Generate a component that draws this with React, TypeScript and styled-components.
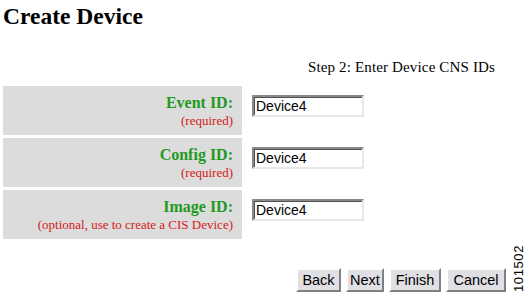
import React from "react";
import styled, { createGlobalStyle } from "styled-components";

const Global = createGlobalStyle`
  html, body { margin: 0; padding: 0; background: #ffffff; }
  body { font-family: "Liberation Serif", "Times New Roman", serif; width: 532px; height: 303px; overflow: hidden; }
`;

const Page = styled.div`
  position: relative;
  width: 532px;
  height: 303px;
  padding: 0 3px;
  box-sizing: border-box;
`;

const Title = styled.h1`
  margin: 0;
  padding-top: 2px;
  font-size: 23.5px;
  font-weight: bold;
  line-height: 28px;
  color: #000;
`;

const Step = styled.div`
  margin-top: 29px;
  padding-right: 34px;
  text-align: right;
  font-size: 15px;
  letter-spacing: 0.15px;
  line-height: 17px;
  color: #000;
`;

const Form = styled.div`
  margin-top: 10px;
  display: grid;
  grid-template-columns: 239px auto;
  column-gap: 10px;
  row-gap: 3px;
`;

const LabelCell = styled.div`
  background: #dcdcdc;
  height: 49px;
  display: flex;
  flex-direction: column;
  justify-content: center;
  align-items: flex-end;
  padding-right: 9px;
  box-sizing: border-box;
`;

const Label = styled.div`
  color: #1f9a1f;
  font-weight: bold;
  font-size: 16px;
  line-height: 18px;
`;

const Hint = styled.div`
  color: #d42020;
  font-size: 13px;
  line-height: 14px;
  margin-top: 2px;
`;

const InputCell = styled.div`
  display: flex;
  align-items: flex-start;
  padding-top: 9px;
`;

const TextInput = styled.input`
  width: 112px;
  height: 22px;
  box-sizing: border-box;
  border: 2px solid;
  border-color: #8a8a8a #e8e8e8 #e8e8e8 #8a8a8a;
  box-shadow: inset 1px 1px 0 #505050;
  padding: 0 2px;
  font-family: "Liberation Sans", Arial, sans-serif;
  font-size: 14px;
  color: #000;
  background: #fff;
  outline: none;
`;

const Buttons = styled.div`
  margin-top: 29px;
  display: flex;
  justify-content: flex-end;
  gap: 5px;
  padding-right: 23px;
`;

const Button = styled.button<{ $w: number }>`
  width: ${(p) => p.$w}px;
  height: 24px;
  margin: 0;
  padding: 0;
  box-sizing: border-box;
  background: #e0dfe3;
  border: 2px solid;
  border-color: #ffffff #808080 #808080 #ffffff;
  font-family: "Liberation Sans", Arial, sans-serif;
  font-size: 14.5px;
  color: #000;
`;

const FigureId = styled.div`
  position: absolute;
  right: 6px;
  top: 245px;
  writing-mode: vertical-rl;
  transform: rotate(180deg);
  font-family: "Liberation Sans", Arial, sans-serif;
  font-size: 13px;
  letter-spacing: 0.6px;
  color: #000;
`;

const rows = [
  { label: "Event ID:", hint: "(required)" },
  { label: "Config ID:", hint: "(required)" },
  { label: "Image ID:", hint: "(optional, use to create a CIS Device)" },
];

export default function App() {
  return (
    <>
      <Global />
      <Page>
        <Title>Create Device</Title>
        <Step>Step 2: Enter Device CNS IDs</Step>
        <Form>
          {rows.map((r) => (
            <React.Fragment key={r.label}>
              <LabelCell>
                <Label>{r.label}</Label>
                <Hint>{r.hint}</Hint>
              </LabelCell>
              <InputCell>
                <TextInput defaultValue="Device4" />
              </InputCell>
            </React.Fragment>
          ))}
        </Form>
        <Buttons>
          <Button $w={45}>Back</Button>
          <Button $w={38}>Next</Button>
          <Button $w={52}>Finish</Button>
          <Button $w={60}>Cancel</Button>
        </Buttons>
        <FigureId>101502</FigureId>
      </Page>
    </>
  );
}
